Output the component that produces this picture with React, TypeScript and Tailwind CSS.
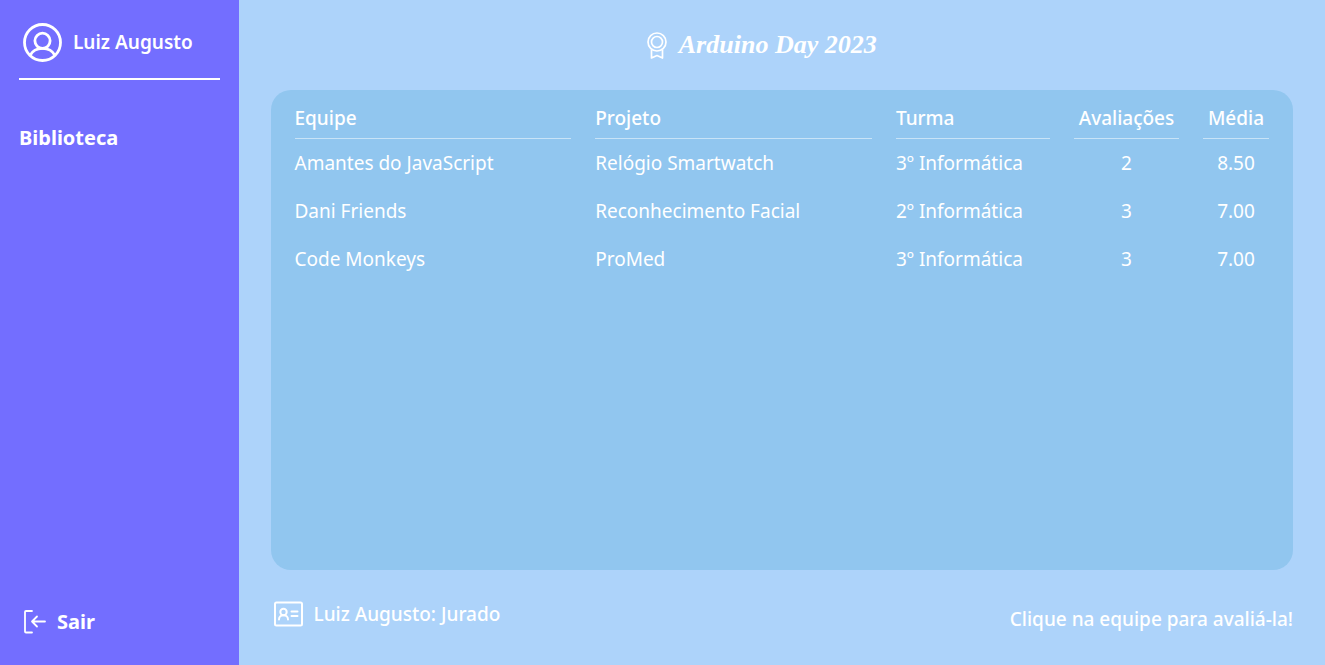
const rows = [
  { team: "Amantes do JavaScript", project: "Relógio Smartwatch", group: "3º Informática", reviews: 2, average: "8.50" },
  { team: "Dani Friends", project: "Reconhecimento Facial", group: "2º Informática", reviews: 3, average: "7.00" },
  { team: "Code Monkeys", project: "ProMed", group: "3º Informática", reviews: 3, average: "7.00" },
];

const columns = [
  { label: "Equipe", head: "text-left" },
  { label: "Projeto", head: "text-left" },
  { label: "Turma", head: "text-left" },
  { label: "Avaliações", head: "text-center" },
  { label: "Média", head: "text-center" },
];

function UserIcon() {
  return (
    <svg className="size-10" viewBox="0 0 40 40" fill="none" stroke="currentColor" strokeWidth="2.8" aria-hidden="true">
      <circle cx="19.500" cy="20.500" r="18" />
      <circle cx="19.500" cy="18.800" r="7.600" />
      <path d="M7 33.500C9.500 28.800 14 26.400 19.500 26.400S29.500 28.800 32 33.500" />
    </svg>
  );
}

function ExitIcon() {
  return (
    <svg className="size-6" viewBox="0 0 24 24" fill="none" stroke="currentColor" strokeWidth="1.8" strokeLinejoin="round" strokeLinecap="round" aria-hidden="true">
      <path d="M9 1H3Q2 1 2 2V21.500Q2 22.500 3 22.500H9" />
      <path d="M22 11.500H9M14 6.500L9 11.500L14 16.500" />
    </svg>
  );
}

function BadgeIcon() {
  return (
    <svg className="h-7 w-5" viewBox="0 0 20 28" fill="none" stroke="currentColor" strokeWidth="1.7" strokeLinejoin="round" aria-hidden="true">
      <circle cx="10" cy="11" r="9" />
      <circle cx="10" cy="11" r="5.500" />
      <path d="M4.500 18.500V27L10 24.500L15.500 27V18.500" />
    </svg>
  );
}

function CardIcon() {
  return (
    <svg className="h-6 w-7 overflow-visible" viewBox="0 0 28 24" fill="none" stroke="currentColor" strokeWidth="2" strokeLinecap="round" aria-hidden="true">
      <rect x="1" y="0.500" width="27" height="23" rx="1.500" />
      <circle cx="9.500" cy="10" r="3.200" />
      <path d="M5 17.500C5 11.800 14 11.800 14 17.500M17.500 9.500H23.500M17.500 14H23.500" />
    </svg>
  );
}

export default function App() {
  return (
    <div className="flex min-h-screen bg-[#add3fa] font-['Noto_Sans',sans-serif] text-[19px] leading-7 text-white">
      <aside className="flex w-[18%] shrink-0 flex-col bg-[#736eff] px-[19px] pt-[22px] pb-[29px]">
        <div className="flex items-center gap-2.5 border-b-2 border-white pr-2 pb-4 pl-1">
          <UserIcon />
          <span className="font-semibold">Luiz Augusto</span>
        </div>
        <nav className="mt-11">
          <a href="#biblioteca" className="text-xl font-bold">Biblioteca</a>
        </nav>
        <button type="button" className="mt-auto flex items-center gap-2.5 self-start pl-1 text-xl font-bold">
          <ExitIcon />
          Sair
        </button>
      </aside>
      <main className="flex min-w-0 grow flex-col px-8">
        <header className="flex h-[90px] items-center justify-center gap-3 pr-10">
          <BadgeIcon />
          <h1 className="font-['Liberation_Serif',serif] text-[26px] font-bold italic">Arduino Day 2023</h1>
        </header>
        <section className="grow rounded-[20px] bg-[#91c6ef]">
          <table className="w-full table-fixed border-separate border-spacing-x-6 border-spacing-y-0">
            <colgroup>
              <col className="w-[31.5%]" />
              <col className="w-[31.5%]" />
              <col />
              <col className="w-[105px]" />
              <col className="w-[66px]" />
            </colgroup>
            <thead>
              <tr className="h-[49px]">
                {columns.map((column) => (
                  <th key={column.label} className={`border-b border-white/50 px-0 pt-2 font-medium ${column.head}`}>
                    {column.label}
                  </th>
                ))}
              </tr>
            </thead>
            <tbody>
              {rows.map((row) => (
                <tr key={row.team} className="h-12 cursor-pointer">
                  <td className="p-0">{row.team}</td>
                  <td className="p-0">{row.project}</td>
                  <td className="p-0">{row.group}</td>
                  <td className="p-0 text-center">{row.reviews}</td>
                  <td className="p-0 text-center">{row.average}</td>
                </tr>
              ))}
            </tbody>
          </table>
        </section>
        <footer className="flex h-[95px] items-center justify-between font-medium">
          <div className="flex items-center gap-3 pb-2 pl-[3px]">
            <CardIcon />
            Luiz Augusto: Jurado
          </div>
          <p className="pt-0.5">Clique na equipe para avaliá-la!</p>
        </footer>
      </main>
    </div>
  );
}
